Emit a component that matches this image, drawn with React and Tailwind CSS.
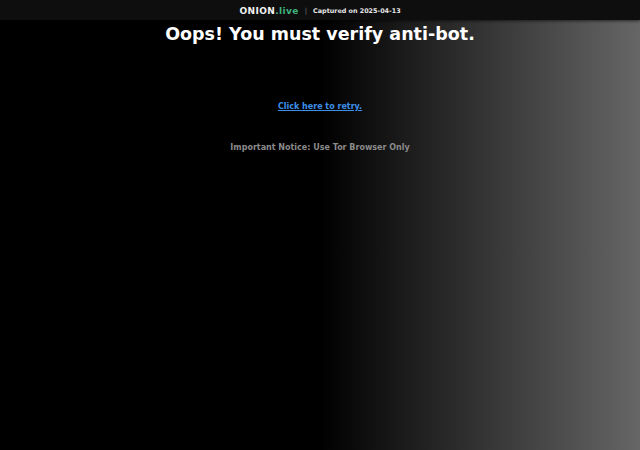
import React from "react";

// Top capture bar, then the centred anti-bot notice over a black-to-grey wash.
const font = { fontFamily: '"DejaVu Sans", Verdana, sans-serif' };

function CaptureBar() {
  return (
    <div className="h-[20px] pt-[3px] w-full bg-[#0e0e0e] shadow-[0_1px_3px_rgba(0,0,0,0.6)] flex items-center justify-center gap-[6px] relative z-10">
      <span className="text-[9px] font-bold text-[#f2f2f2] tracking-[0.4px]">
        ONION<span className="text-[#3fb37f]">.live</span>
      </span>
      <span className="text-[7px] text-[#777]">|</span>
      <span className="text-[6.4px] font-bold text-[#e6e6e6]">Captured on 2025-04-13</span>
    </div>
  );
}

export default function App() {
  return (
    <div style={font} className="w-[640px] h-[450px] overflow-hidden flex flex-col bg-black">
      <CaptureBar />
      <div className="flex-1 flex flex-col items-center bg-[linear-gradient(to_right,#000_50%,#666_100%)]">
        <h1 className="mt-[3px] text-[17.5px] leading-[22px] font-bold text-white">
          Oops! You must verify anti-bot.
        </h1>
        <a href="#" className="mt-[56px] text-[8px] font-bold text-[#3d8fe8] underline">
          Click here to retry.
        </a>
        <p className="mt-[29px] text-[8px] font-bold text-[#8a8a8a]">
          Important Notice: Use Tor Browser Only
        </p>
      </div>
    </div>
  );
}
